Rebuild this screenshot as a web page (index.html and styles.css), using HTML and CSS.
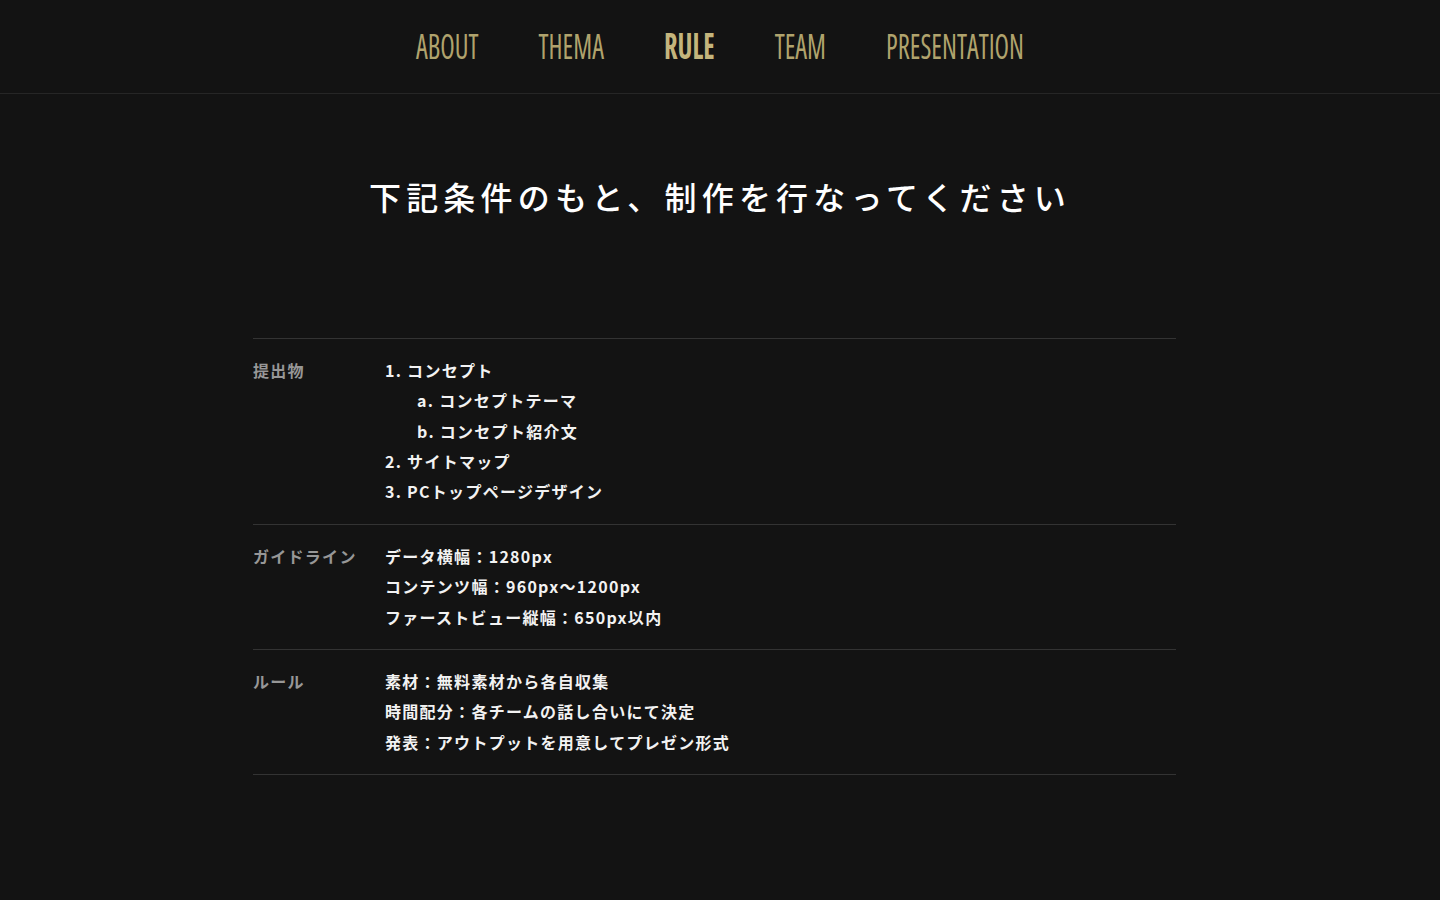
FILE: index.html
```html
<!DOCTYPE html>
<html lang="ja">
<head>
    <meta charset="UTF-8">
    <meta name="viewport" content="width=device-width, initial-scale=1.0">
    <title>RULE</title>
    <link rel="stylesheet" href="styles.css">
</head>
<body>
    <header class="header">
        <nav class="nav">
            <a class="nav-item" href="#about">ABOUT</a>
            <a class="nav-item" href="#thema">THEMA</a>
            <a class="nav-item is-current" href="#rule">RULE</a>
            <a class="nav-item" href="#team">TEAM</a>
            <a class="nav-item" href="#presentation">PRESENTATION</a>
        </nav>
    </header>

    <main class="rule">
        <h1 class="rule-title">下記条件のもと、制作を行なってください</h1>

        <dl class="rule-list">
            <div class="rule-row">
                <dt class="rule-label">提出物</dt>
                <dd class="rule-body">
                    <p>1. コンセプト</p>
                    <p class="sub">a. コンセプトテーマ</p>
                    <p class="sub">b. コンセプト紹介文</p>
                    <p>2. サイトマップ</p>
                    <p>3. PCトップページデザイン</p>
                </dd>
            </div>
            <div class="rule-row">
                <dt class="rule-label">ガイドライン</dt>
                <dd class="rule-body">
                    <p>データ横幅：1280px</p>
                    <p>コンテンツ幅：960px〜1200px</p>
                    <p>ファーストビュー縦幅：650px以内</p>
                </dd>
            </div>
            <div class="rule-row">
                <dt class="rule-label">ルール</dt>
                <dd class="rule-body">
                    <p>素材：無料素材から各自収集</p>
                    <p>時間配分：各チームの話し合いにて決定</p>
                    <p>発表：アウトプットを用意してプレゼン形式</p>
                </dd>
            </div>
        </dl>
    </main>
</body>
</html>
```

FILE: styles.css
```css
body {
    margin: 0;
    padding: 0;
    background-color: #131313;
    color: #f2f2f2;
    font-family: "Noto Sans CJK JP", "Noto Sans", sans-serif;
}
.header {
    height: 94px;
    border-bottom: 1px solid #262626;
    box-sizing: border-box;
}
/* no DIN condensed installed, so the row is squeezed as a whole */
.nav {
    display: flex;
    justify-content: center;
    align-items: center;
    gap: 79px;
    height: 100%;
    padding-bottom: 2px;
    box-sizing: border-box;
    transform: scaleX(0.76);
}
.nav-item {
    font-family: "Open Sans", "Roboto", sans-serif;
    font-stretch: 75%;
    font-size: 35px;
    color: #b0a36d;
    text-decoration: none;
}
.nav-item.is-current {
    font-weight: bold;
    color: #c4b57c;
}
.rule {
    width: 934px;
    margin: 0 auto;
    padding-top: 80px;
}
.rule-title {
    margin: 0 0 119px;
    text-align: center;
    font-size: 32px;
    font-weight: 500;
    letter-spacing: 0.162em;
    line-height: 1.4;
    color: #fff;
}
.rule-list {
    width: 923px;
    margin: 0;
    border-top: 1px solid #333;
}
.rule-row {
    display: flex;
    padding: 16px 0 17px;
    border-bottom: 1px solid #333;
}
.rule-label {
    width: 132px;
    flex-shrink: 0;
    font-size: 16px;
    font-weight: bold;
    line-height: 30.4px;
    letter-spacing: 0.08em;
    color: #979797;
}
.rule-body {
    margin: 0;
    font-size: 16px;
    font-weight: bold;
    line-height: 30.4px;
    letter-spacing: 0.08em;
}
.rule-body p {
    margin: 0;
}
.rule-body .sub {
    padding-left: 32px;
}
```
